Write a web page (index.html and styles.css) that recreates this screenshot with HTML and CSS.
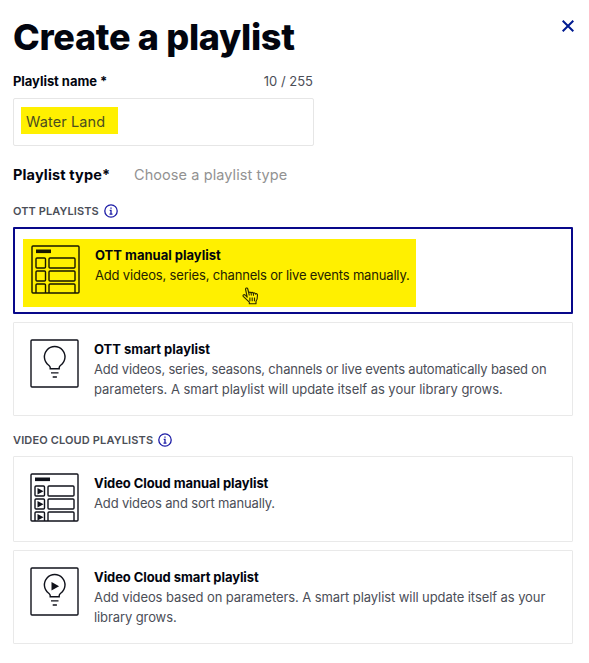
FILE: index.html
```html
<!DOCTYPE html>
<html lang="en">
<head>
<meta charset="utf-8">
<title>Create a playlist</title>
<link rel="stylesheet" href="styles.css">
</head>
<body>
<svg width="0" height="0" class="defs">
  <defs>
    <g id="frame"><rect x="1" y="1" width="47" height="47" rx="1"/></g>
    <g id="rows">
      <path d="M5 6.300h15" stroke-width="3.600"/>
      <rect x="5" y="13" width="9.500" height="10" rx="1"/><rect x="18" y="13" width="26" height="10" rx="1"/>
      <rect x="5" y="26" width="9.500" height="10" rx="1"/><rect x="18" y="26" width="26" height="10" rx="1"/>
      <path d="M5 48v-8q0-1 1-1h7.500q1 0 1 1v8M18 48v-8q0-1 1-1h24q1 0 1 1v8"/>
    </g>
    <g id="bulb"><path d="M20.200 29.800v-1.300c0-1-.6-1.500-1.500-2.300a10.300 10.300 0 1 1 12 0c-.9.8-1.500 1.300-1.500 2.300v1.300zM21 33.900h7.500M22.700 38h4.200"/></g>
    <g id="info"><circle cx="7" cy="7" r="6.200"/><path d="M5.700 6.400H7v3.800M5.500 10.200h3M7 3.600v1.200"/></g>
  </defs>
</svg>
<main class="dialog">
  <header class="head">
    <h1>Create a playlist</h1>
    <button class="close" aria-label="Close"><svg width="12" height="12" viewBox="0 0 12 12"><path d="M.7.7l10.600 10.600M11.300.7L.7 11.300"/></svg></button>
  </header>
  <div class="field-head"><label class="name-label">Playlist name *</label><span class="count">10 / 255</span></div>
  <div class="input"><span class="mark"><span class="value">Water Land</span></span></div>
  <div class="type-row"><span class="type-label">Playlist type*</span><span class="type-hint">Choose a playlist type</span></div>

  <div class="group"><span class="g1">OTT PLAYLISTS</span><svg class="info" width="14" height="14" viewBox="0 0 14 14"><use href="#info"/></svg></div>
  <section class="card selected">
    <div class="highlight">
      <svg class="icon" width="49" height="49" viewBox="0 0 49 49"><use href="#frame"/><use href="#rows"/></svg>
      <div class="text">
        <h2 class="t1">OTT manual playlist</h2>
        <p class="d1">Add videos, series, channels or live events manually.</p>
      </div>
      <svg class="cursor" width="17" height="18" viewBox="0 0 17 18"><path d="M5.200 10.200L3.600 2.600C3.200.7 5.400.4 5.800 2l1 4.200c.2-1.500 2-1.500 2.300 0 .3-1.200 2-1.200 2.300.4.400-1.100 1.900-.9 2.200.6.600-1 1.900-.6 1.900.9 0 3.800-.3 4.900-1.500 6.300v2.300H7.300v-1.500L1.500 9.700C.3 8.300 1.900 7 3.200 8zM7.900 10.500v3.700M10.200 10.500v3.700M12.500 10.500v3.700M6.800 6.200l.5 2.300M9.100 6.300l.3 2.200M11.400 6.700l.1 2"/></svg>
    </div>
  </section>
  <section class="card tall">
    <svg class="icon" width="49" height="49" viewBox="0 0 49 49"><use href="#frame"/><use href="#bulb"/></svg>
    <div class="text">
      <h2 class="t2">OTT smart playlist</h2>
      <p class="d2">Add videos, series, seasons, channels or live events automatically based on</p>
      <p class="d3">parameters. A smart playlist will update itself as your library grows.</p>
    </div>
  </section>

  <div class="group second"><span class="g2">VIDEO CLOUD PLAYLISTS</span><svg class="info" width="14" height="14" viewBox="0 0 14 14"><use href="#info"/></svg></div>
  <section class="card short">
    <svg class="icon" width="49" height="49" viewBox="0 0 49 49"><use href="#frame"/><use href="#rows"/><path class="solid" d="M7.500 15l6 3.200-6 3.200zM7.500 28l6 3.200-6 3.200zM7.500 41l6 3.200-6 3.200z"/></svg>
    <div class="text">
      <h2 class="t3">Video Cloud manual playlist</h2>
      <p class="d4">Add videos and sort manually.</p>
    </div>
  </section>
  <section class="card tall">
    <svg class="icon" width="49" height="49" viewBox="0 0 49 49"><use href="#frame"/><use href="#bulb"/><path class="solid" d="M21.500 15l7.600 4.300-7.600 4.300z"/></svg>
    <div class="text">
      <h2 class="t4">Video Cloud smart playlist</h2>
      <p class="d5">Add videos based on parameters. A smart playlist will update itself as your</p>
      <p class="d6">library grows.</p>
    </div>
  </section>
</main>
</body>
</html>
```
FILE: styles.css
```css
* { box-sizing: border-box; }
body { margin: 0; background: #fff; font-family: Inter, "Liberation Sans", sans-serif; color: #02050f; }
h1, h2, p { margin: 0; white-space: nowrap; }
.defs { display: block; height: 0; }
.dialog { width: 589px; height: 663px; padding: 15px 16px 0 13px; display: flex; flex-direction: column; }
.head { display: flex; justify-content: space-between; height: 44px; }
h1 { font-size: 36px; line-height: 44px; font-weight: 800; letter-spacing: -0.3px; }
.close { border: 0; background: none; padding: 5px 0 0; margin: 0 -3px 0 0; width: 14px; height: 18px; display: flex; flex: none; }
.close svg { fill: none; stroke: #001b91; stroke-width: 2; flex: none; }
.field-head { display: flex; justify-content: space-between; width: 300px; height: 20px; margin-top: 12px; line-height: 20px; font-size: 13px; white-space: nowrap; }
.name-label { font-weight: 700; letter-spacing: -0.05px; }
.count { color: #4b4e57; }
.input { width: 301px; height: 48px; margin-top: 7px; border: 1px solid #e6e6e6; border-radius: 2px; padding: 8px 7px; }
.mark { display: block; width: 97px; height: 27px; padding-left: 5px; background: #fff000; color: #4b4e20; font-size: 14.5px; line-height: 29px; letter-spacing: 0.12px; white-space: nowrap; }
.type-row { display: flex; align-items: center; height: 24px; margin-top: 16px; font-size: 14.5px; white-space: nowrap; }
.type-label { width: 121px; font-weight: 700; letter-spacing: 0.15px; }
.type-hint { color: #929292; letter-spacing: 0.08px; }
.group { display: flex; align-items: center; gap: 5px; height: 16px; margin-top: 17px; font-size: 11px; font-weight: 600; color: #4b4e57; }
.g1 { letter-spacing: 0.09px; }
.g2 { letter-spacing: 0.14px; }
.info { fill: none; stroke: #1c1ca6; stroke-width: 1.3; }
.second { margin-top: 16px; }
.card { width: 560px; flex: none; display: flex; gap: 15.5px; padding: 16px 16px 16px 15.5px; border: 1px solid #e9e9e9; border-radius: 1px; }
.selected { height: 87px; margin-top: 8px; padding: 10px 8px; border: 2px solid #08088a; }
.highlight { position: relative; flex: none; width: 393px; height: 68px; padding: 6px 8px; display: flex; gap: 15px; background: #fff000; }
.tall { height: 94px; margin-top: 8px; }
.short { height: 86px; margin-top: 8px; }
.icon { flex: none; fill: none; stroke: #10121b; stroke-width: 1.4; }
.highlight .icon { stroke: #171600; margin-top: -0.5px; }
.solid { fill: #10121b; stroke: none; }
.text { line-height: 20px; font-size: 13px; color: #4b4e57; }
h2 { font-size: 13px; line-height: 20px; font-weight: 700; color: #02050f; }
.t3, .t4 { letter-spacing: -0.08px; }
.d1 { letter-spacing: -0.17px; }
.d2 { letter-spacing: -0.18px; }
.d3 { letter-spacing: -0.04px; }
.d4 { letter-spacing: -0.15px; }
.d5 { letter-spacing: -0.08px; }
.d6 { letter-spacing: -0.1px; }
.highlight p { color: #242300; }
.cursor { position: absolute; left: 219px; top: 48px; fill: none; stroke: #292700; stroke-width: 1.1; stroke-linejoin: round; }
```
